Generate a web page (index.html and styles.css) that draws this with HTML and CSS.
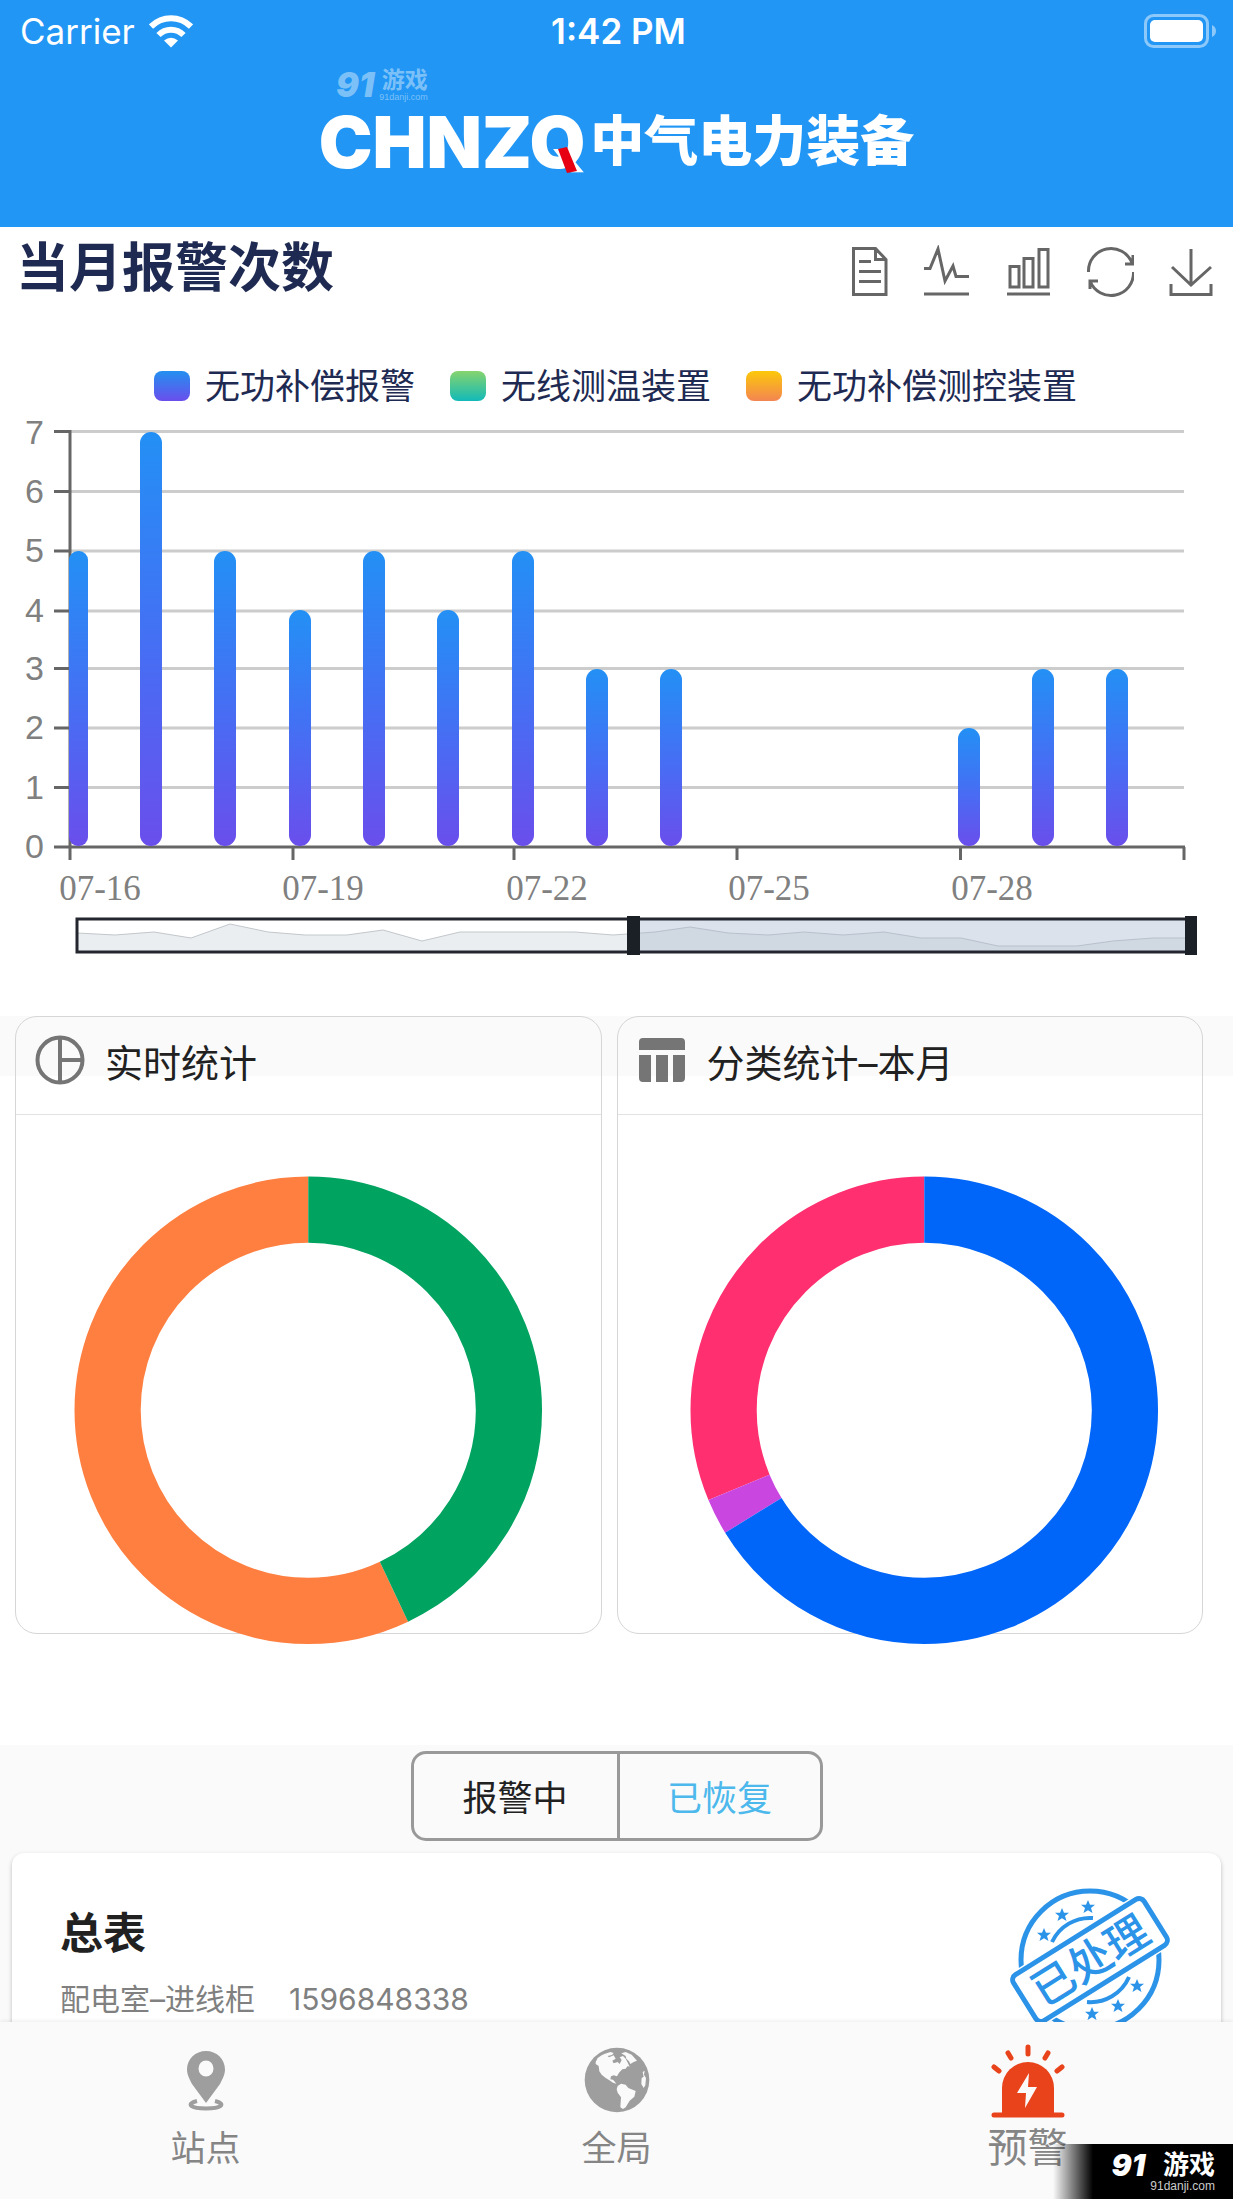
FILE: index.html
```html
<!DOCTYPE html>
<html lang="zh-CN">
<head>
<meta charset="utf-8">
<meta name="viewport" content="width=device-width, initial-scale=1">
<title>预警</title>
<link rel="stylesheet" href="styles.css">
</head>
<body>
<div class="app">
  <header class="top">
    <div class="status">
      <div class="carrier">
        <span>Carrier</span>
        <svg class="wifi" viewBox="0 0 44 33" aria-hidden="true">
          <g fill="none" stroke="#fff" stroke-width="6">
            <path d="M2 11.500C13.500 .5 30.500 .5 42 11.500"/>
            <path d="M9.500 20C16.500 13 27.500 13 34.500 20"/>
          </g>
          <path d="M15 25.500Q22 20 29 25.500L22 32.500Z" fill="#fff"/>
        </svg>
      </div>
      <time class="clock">1:42 PM</time>
      <svg class="battery" viewBox="0 0 73 34" aria-hidden="true">
        <rect x="1.500" y="1.500" width="62" height="31" rx="8" fill="none" stroke="#8cc8fa" stroke-width="3"/>
        <rect x="6" y="6" width="53" height="22" rx="5" fill="#fff"/>
        <path d="M68 11Q72 13 72 17T68 23Z" fill="#8cc8fa"/>
      </svg>
    </div>
    <div class="brand">
      <span class="brand-en">CHNZQ<svg class="brand-slash" viewBox="0 0 20 26" aria-hidden="true"><path d="M0 2L9 0L19 24L9 26Z" fill="#e60012"/></svg></span>
      <span class="brand-cn">中气电力装备</span>
    </div>
    <div class="mark mark-faint" aria-hidden="true">
      <b class="mark-num">91</b>
      <span class="mark-text"><b>游戏</b><small>91danji.com</small></span>
    </div>
  </header>

  <main class="content">
    <section class="alarms">
      <div class="alarms-head">
        <h1>当月报警次数</h1>
        <div class="tools">
          <button type="button" aria-label="数据视图"><svg viewBox="843 245 48 54"><path d="M853.500 248.500H875.500L886 259.500V294.500H853.500ZM875.500 248.500V259.500H886M859 261.500H871M859 271.500H881M859 281.500H881"/></svg></button>
          <button type="button" aria-label="折线图"><svg viewBox="924 245 48 54"><path d="M924 268.500H930L938 249L945 281L953 266L956 276.500H969M924 294H969"/></svg></button>
          <button type="button" aria-label="柱状图"><svg viewBox="1005 245 48 54"><path d="M1010 266.500H1019V287H1010ZM1024 258.500H1033V287H1024ZM1039 249.500H1048V287H1039ZM1007 294H1050"/></svg></button>
          <button type="button" aria-label="还原"><svg viewBox="1086 245 48 54"><path d="M1088.500 272A22.500 22.500 0 0 1 1132 263M1133 255V264H1125M1133.500 272A22.500 22.500 0 0 1 1090 281M1090 289V281H1098"/></svg></button>
          <button type="button" aria-label="下载"><svg viewBox="1167 245 48 54"><path d="M1191 249V285M1172 267L1191 285L1211 267M1171 284V294.500H1211V284"/></svg></button>
        </div>
      </div>
      <ul class="legend">
        <li><i class="chip chip-blue"></i>无功补偿报警</li>
        <li><i class="chip chip-green"></i>无线测温装置</li>
        <li><i class="chip chip-yellow"></i>无功补偿测控装置</li>
      </ul>
      <svg class="plot" viewBox="0 412 1233 604" role="img" aria-label="当月报警次数">
        <defs>
          <linearGradient id="bar" x1="0" y1="0" x2="0" y2="1">
            <stop offset="0" stop-color="#2390f5"/>
            <stop offset=".5" stop-color="#4470f4"/>
            <stop offset="1" stop-color="#6a4eec"/>
          </linearGradient>
        </defs>
        <path class="grid" d="M70 431.500H1184M70 491.500H1184M70 551H1184M70 611H1184M70 668.500H1184M70 728H1184M70 787.500H1184"/>
        <path class="axis" d="M54 431.500H70M54 491.500H70M54 551H70M54 611H70M54 668.500H70M54 728H70M54 787.500H70M54 847H1185M70 430V860M293 847V860M514 847V860M737 847V860M960.500 847V860M1184 847V860"/>
        <g fill="url(#bar)">
          <rect x="69" y="551" width="19" height="295" rx="9"/>
          <rect x="140" y="432" width="22" height="414" rx="11"/>
          <rect x="214" y="551" width="22" height="295" rx="11"/>
          <rect x="289" y="610" width="22" height="236" rx="11"/>
          <rect x="363" y="551" width="22" height="295" rx="11"/>
          <rect x="437" y="610" width="22" height="236" rx="11"/>
          <rect x="512" y="551" width="22" height="295" rx="11"/>
          <rect x="586" y="669" width="22" height="177" rx="11"/>
          <rect x="660" y="669" width="22" height="177" rx="11"/>
          <rect x="958" y="728" width="22" height="118" rx="11"/>
          <rect x="1032" y="669" width="22" height="177" rx="11"/>
          <rect x="1106" y="669" width="22" height="177" rx="11"/>
        </g>
        <g class="ylabels">
          <text x="44" y="444">7</text>
          <text x="44" y="503">6</text>
          <text x="44" y="562">5</text>
          <text x="44" y="622">4</text>
          <text x="44" y="680">3</text>
          <text x="44" y="739">2</text>
          <text x="44" y="799">1</text>
          <text x="44" y="858">0</text>
        </g>
        <g class="xlabels">
          <text x="100" y="900">07-16</text>
          <text x="323" y="900">07-19</text>
          <text x="547" y="900">07-22</text>
          <text x="769" y="900">07-25</text>
          <text x="992" y="900">07-28</text>
        </g>
        <path d="M77 933L115 935L154 932L191 938L230 924L268 932L305 935H347L383 930L422 941L460 932H575L613 935L655 932L690 927L728 933L768 935L804 932L843 935L884 932L921 938H961L998 946H1077L1113 941L1153 938H1190V952H77Z" fill="#ebeef1"/>
        <path d="M77 933L115 935L154 932L191 938L230 924L268 932L305 935H347L383 930L422 941L460 932H575L613 935L655 932L690 927L728 933L768 935L804 932L843 935L884 932L921 938H961L998 946H1077L1113 941L1153 938H1190" fill="none" stroke="#c2c7cb"/>
        <rect x="634" y="919" width="557" height="33" fill="#a7b7cc" fill-opacity=".4"/>
        <rect x="77" y="919" width="1114" height="33" fill="none" stroke="#23262e" stroke-width="3"/>
        <rect x="627" y="916" width="13" height="39" fill="#1b1f26"/>
        <rect x="1185" y="916" width="12" height="39" fill="#1b1f26"/>
      </svg>
    </section>

    <section class="stats">
      <div class="stat">
        <article class="panel">
          <h2>
            <svg class="panel-icon" viewBox="0 0 50 50" aria-hidden="true"><g fill="none" stroke="#757575" stroke-width="4"><circle cx="25" cy="25" r="22.500"/><path d="M25 3V47M25 25H47"/></g></svg>
            实时统计
          </h2>
        </article>
        <svg class="donut" viewBox="0 0 467 467" role="img" aria-label="实时统计">
          <g fill="none" stroke-width="66" transform="rotate(-90 233.500 233.500)">
            <circle cx="233.500" cy="233.500" r="200" pathLength="360" stroke="#ff7f40" stroke-dasharray="205.300 154.700" stroke-dashoffset="-154.700"/>
            <circle cx="233.500" cy="233.500" r="200" pathLength="360" stroke="#00a360" stroke-dasharray="154.700 205.300"/>
          </g>
        </svg>
      </div>
      <div class="stat stat-end">
        <article class="panel">
          <h2>
            <svg class="panel-icon" viewBox="0 0 50 50" aria-hidden="true"><g fill="#757575"><path d="M2 15V7Q2 3 6 3H44Q48 3 48 7V15ZM2 20H14V47H6Q2 47 2 43ZM19 20H31V47H19ZM36 20H48V43Q48 47 44 47H36Z"/></g></svg>
            分类统计–本月
          </h2>
        </article>
        <svg class="donut" viewBox="0 0 467 467" role="img" aria-label="分类统计–本月">
          <g fill="none" stroke-width="66" transform="rotate(-90 233.500 233.500)">
            <circle cx="233.500" cy="233.500" r="200" pathLength="360" stroke="#ff2f70" stroke-dasharray="112.600 247.400" stroke-dashoffset="-247.400"/>
            <circle cx="233.500" cy="233.500" r="200" pathLength="360" stroke="#c947e0" stroke-dasharray="9 351" stroke-dashoffset="-238.400"/>
            <circle cx="233.500" cy="233.500" r="200" pathLength="360" stroke="#0066fa" stroke-dasharray="238.400 121.600"/>
          </g>
        </svg>
      </div>
    </section>

    <section class="records">
      <div class="segment">
        <button type="button">报警中</button>
        <button type="button" class="is-on">已恢复</button>
      </div>
      <article class="record">
        <div class="record-text">
          <h3>总表</h3>
          <p><span>配电室–进线柜</span><span>1596848338</span></p>
        </div>
        <svg class="stamp" viewBox="0 0 200 170" role="img" aria-label="已处理">
          <defs><path id="star" d="M0 -7L2 -2.300L7 -2.200L3 1L4.500 6L0 3.200L-4.500 6L-3 1L-7 -2.200L-2 -2.300Z"/></defs>
          <g fill="none" stroke="#2b93e8">
            <circle cx="100" cy="90" r="69" stroke-width="5"/>
            <path d="M62 72A42 42 0 0 1 103 48" stroke-width="4"/>
            <path d="M97 132A42 42 0 0 0 139 107" stroke-width="4"/>
          </g>
          <g fill="#2b93e8">
            <use href="#star" x="54" y="65"/><use href="#star" x="72" y="45"/><use href="#star" x="98" y="37"/>
            <use href="#star" x="147" y="116"/><use href="#star" x="128" y="136"/><use href="#star" x="102" y="144"/>
          </g>
          <g transform="rotate(-32 100 90)">
            <rect x="18" y="59" width="164" height="62" fill="#fff"/>
            <rect x="23" y="63" width="154" height="54" rx="6" fill="#fff" stroke="#2b93e8" stroke-width="5"/>
            <text x="100" y="106" text-anchor="middle">已处理</text>
          </g>
        </svg>
      </article>
    </section>
  </main>

  <nav class="tabs">
    <a href="#stations">
      <svg class="tab-icon" viewBox="0 0 74 74" aria-hidden="true">
        <path fill="#9e9e9e" fill-rule="evenodd" d="M37 7C26.500 7 18 15 18 25.500C18 31 21 36 23 40L37 59L51 40C53 36 56 31 56 25.500C56 15 47.500 7 37 7ZM37 16.500A7.500 8 0 1 1 37 32.500A7.500 8 0 1 1 37 16.500Z"/>
        <path fill="none" stroke="#9e9e9e" stroke-width="4" d="M28 57C16 60 22 64.500 37 64.500S58 60 46 57"/>
      </svg>
      <span>站点</span>
    </a>
    <a href="#overview">
      <svg class="tab-icon" viewBox="59 44 222 222" aria-hidden="true">
        <circle cx="170" cy="152" r="97" fill="#9e9e9e"/>
        <g fill="#fafafa">
          <path d="M106 98L112 86L124 78L132 74L150 68L160 71L155 77L142 80L146 84L160 78L166 88L156 94L160 102L172 98L178 104L184 92L178 84L188 80L196 88L200 96L208 112L202 110L196 118L186 120L176 130L170 141L160 138L152 141L150 150L158 151L164 158L168 163L158 160L146 152L136 146L124 136L117 126L115 110L106 104Z"/>
          <path d="M183 72L196 68L214 76L230 94L220 98L210 104L206 96L198 88L196 80Z"/>
          <path d="M172 170L182 163L196 166L204 176L226 185L222 202L208 214L196 234L188 239L180 234L182 204L172 190L169 180Z"/>
          <path d="M247 128L253 124L251 136L257 146L255 168L250 176L243 164L244 146L250 142Z"/>
        </g>
      </svg>
      <span>全局</span>
    </a>
    <a href="#alerts" class="is-active" aria-current="page">
      <svg class="tab-icon" viewBox="0 0 74 74" aria-hidden="true">
        <path fill="none" stroke="#e8431a" stroke-width="5" stroke-linecap="round" d="M37 3V10M17 9L20 14M57 9L54 14M3 23L8 27M71 23L66 27M3 71H71"/>
        <path fill="#e8431a" d="M11 71V44A26 26 0 0 1 63 44V71Z"/>
        <path fill="#fafafa" d="M38 29L26 49H35L34 64L46 43H37Z"/>
      </svg>
      <span>预警</span>
    </a>
  </nav>

  <div class="mark mark-corner" aria-hidden="true">
    <b class="mark-num">91</b>
    <span class="mark-text"><b>游戏</b><small>91danji.com</small></span>
  </div>
</div>
</body>
</html>
```
FILE: styles.css
```css
* { box-sizing: border-box; }

body {
  margin: 0;
  background: #fafafa;
  color: #212121;
  font-family: Inter, "Noto Sans CJK SC", sans-serif;
}

h1, h2, h3, p, ul { margin: 0; padding: 0; }
ul { list-style: none; }
svg { display: block; flex: none; }

button {
  padding: 0;
  border: 0;
  background: none;
  font: inherit;
  color: inherit;
}

.app {
  position: relative;
  display: flex;
  flex-direction: column;
  height: 100vh;
}

/* Header */
.top {
  position: relative;
  flex: none;
  padding-bottom: 50px;
  background: #2196f5;
  color: #fff;
}

.status {
  display: grid;
  grid-template-columns: 1fr auto 1fr;
  align-items: center;
  height: 62px;
  padding: 0 16px 0 20px;
  font-size: 35px;
  line-height: 40px;
}

.carrier { display: flex; align-items: center; gap: 14px; }
.wifi { width: 44px; height: 33px; }
.clock { font-weight: 600; }
.battery { width: 73px; height: 34px; justify-self: end; }

.brand {
  display: flex;
  justify-content: center;
  align-items: center;
  gap: 4px;
  height: 70px;
  margin-top: 45px;
  font-weight: 900;
  line-height: 70px;
}

.brand-en { position: relative; font-size: 72px; }
.brand-cn { font-size: 54px; }

.brand-slash {
  position: absolute;
  right: 8px;
  bottom: 4px;
  width: 20px;
  height: 26px;
}

/* Watermarks */
.mark {
  position: absolute;
  display: flex;
  align-items: center;
  gap: 5px;
}

.mark-num { font-style: italic; font-weight: 900; }
.mark-text { display: flex; flex-direction: column; align-items: flex-end; }
.mark-text small { font-family: "Liberation Sans", sans-serif; }

.mark-faint { left: 336px; top: 68px; color: #7cc0f8; }
.mark-faint b { font-size: 23px; line-height: 24px; }
.mark-faint .mark-num { font-size: 34px; line-height: 34px; }
.mark-faint small { font-size: 9px; line-height: 10px; }

.mark-corner {
  right: 0;
  bottom: 0;
  justify-content: flex-end;
  width: 180px;
  height: 55px;
  padding-right: 18px;
  background: linear-gradient(90deg, transparent, #000 40px);
  color: #fff;
}

.mark-corner .mark-num { align-self: flex-start; margin-top: 6px; font-size: 30px; line-height: 30px; }
.mark-corner .mark-text b { font-size: 26px; line-height: 28px; }
.mark-corner small { font-size: 12px; line-height: 14px; color: #ccc; }

/* Scrolling content */
.content {
  flex: 1;
  min-height: 0;
  overflow-y: auto;
  scrollbar-width: none;
}

.alarms { background: #fff; }

.alarms-head {
  display: flex;
  justify-content: space-between;
  align-items: center;
  height: 82px;
  padding: 0 18px 0 16px;
}

.alarms-head h1 {
  color: #1e2a52;
  font-size: 53px;
  font-weight: 700;
  line-height: 60px;
}

.tools { display: flex; gap: 33px; padding-top: 8px; }

.tools svg {
  width: 48px;
  height: 54px;
  fill: none;
  stroke: #666;
  stroke-width: 3;
}

.legend {
  display: flex;
  justify-content: center;
  gap: 35px;
  padding: 51px 2px 0 0;
  color: #1e2a52;
  font-size: 35px;
  line-height: 52px;
}

.legend li { display: flex; align-items: center; gap: 15px; }
.chip { width: 36px; height: 30px; border-radius: 8px; }
.chip-blue { background: linear-gradient(#2390f0, #6a4eec); }
.chip-green { background: linear-gradient(#86d46e, #12b9b9); }
.chip-yellow { background: linear-gradient(#fcc80a, #f38552); }

.plot { width: 100%; height: auto; }
.grid { fill: none; stroke: #ccc; stroke-width: 3; }
.axis { fill: none; stroke: #666; stroke-width: 3; }
.ylabels { fill: #808080; font: 34px "Liberation Sans", sans-serif; text-anchor: end; }
.xlabels { fill: #808080; font: 35px "Liberation Serif", serif; text-anchor: middle; }

/* Donut panels */
.stats {
  display: grid;
  grid-template-columns: 1fr 1fr;
  padding-bottom: 100px;
  background: linear-gradient(#fafafa 60px, #fff 60px);
}

.stat { display: grid; justify-items: center; }

.panel,
.donut { grid-area: 1 / 1; }

.panel {
  justify-self: stretch;
  height: 618px;
  margin: 0 15px;
  border: 1px solid #d6d6d6;
  border-radius: 22px;
}

.stat-end .panel { margin: 0 30px 0 0; }

.panel h2 {
  display: flex;
  align-items: center;
  gap: 20px;
  height: 98px;
  padding: 0 19px 11px;
  border-bottom: 1px solid #e2e2e2;
  font-size: 38px;
  font-weight: 400;
}

.panel-icon { width: 50px; height: 50px; }
.donut { width: 76%; height: auto; margin-top: 160px; }

/* Records */
.records { padding: 6px 12px 0; }

.segment {
  display: grid;
  grid-template-columns: 1fr 1fr;
  width: 412px;
  height: 90px;
  margin: 0 auto 12px;
  border: 3px solid #999;
  border-radius: 15px;
  font-size: 35px;
}

.segment .is-on { border-left: 3px solid #999; color: #4db8ec; }

.record {
  display: flex;
  justify-content: space-between;
  align-items: flex-start;
  min-height: 240px;
  padding: 17px 31px 16px 48px;
  border-radius: 12px;
  background: #fff;
  box-shadow: 0 2px 4px rgba(0, 0, 0, .25);
}

.record-text { padding-top: 37px; }
.record h3 { font-size: 43px; font-weight: 700; line-height: 52px; }

.record p {
  display: flex;
  gap: 34px;
  margin-top: 20px;
  color: #808080;
  font-size: 30px;
  line-height: 40px;
}

.stamp { width: 200px; height: 170px; }
.stamp text { fill: #2b93e8; font-size: 43px; font-weight: 500; }

/* Bottom tabs */
.tabs {
  position: relative;
  display: grid;
  grid-template-columns: repeat(3, 1fr);
  flex: none;
  height: 177px;
  padding-top: 22px;
  background: #fafafa;
  box-shadow: 0 -1px 4px rgba(0, 0, 0, .08);
}

.tabs a {
  display: flex;
  flex-direction: column;
  align-items: center;
  gap: 10px;
  color: #858585;
  font-size: 35px;
  line-height: 40px;
  text-decoration: none;
}

.tabs .is-active { font-size: 40px; }
.tab-icon { width: 74px; height: 74px; }
```
